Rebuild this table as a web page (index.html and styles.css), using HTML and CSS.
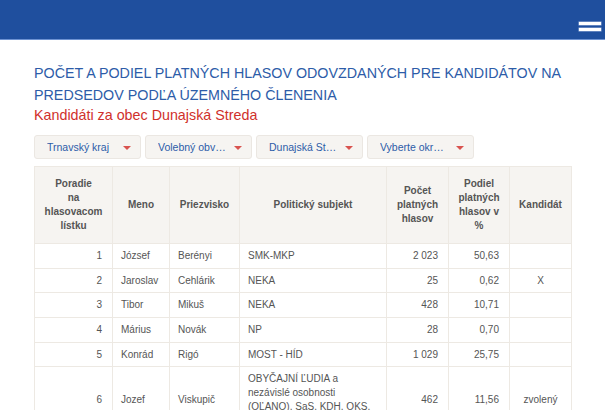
FILE: index.html
```html
<!DOCTYPE html>
<html lang="sk">
<head>
<meta charset="utf-8">
<link rel="stylesheet" href="styles.css">
</head>
<body>
<header class="topbar">
  <button class="burger" aria-label="Menu"><span></span><span></span></button>
</header>
<main class="content">
  <h1 class="title">POČET A PODIEL PLATNÝCH HLASOV ODOVZDANÝCH PRE KANDIDÁTOV NA PREDSEDOV PODĽA ÚZEMNÉHO ČLENENIA</h1>
  <h2 class="subtitle">Kandidáti za obec Dunajská Streda</h2>
  <div class="filters">
    <div class="select"><span class="select-text">Trnavský kraj</span><span class="caret"></span></div>
    <div class="select"><span class="select-text">Volebný obvod č. 4</span><span class="caret"></span></div>
    <div class="select"><span class="select-text">Dunajská Streda</span><span class="caret"></span></div>
    <div class="select"><span class="select-text select-text--short">Vyberte okrsok</span><span class="caret"></span></div>
  </div>
  <table class="results">
    <colgroup>
      <col class="c1"><col class="c2"><col class="c3"><col class="c4"><col class="c5"><col class="c6"><col class="c7">
    </colgroup>
    <thead>
      <tr>
        <th>Poradie<br>na<br>hlasovacom<br>lístku</th>
        <th>Meno</th>
        <th>Priezvisko</th>
        <th>Politický subjekt</th>
        <th>Počet<br>platných<br>hlasov</th>
        <th>Podiel<br>platných<br>hlasov v<br>%</th>
        <th>Kandidát</th>
      </tr>
    </thead>
    <tbody>
      <tr><td class="num">1</td><td>József</td><td>Berényi</td><td>SMK-MKP</td><td class="num">2 023</td><td class="num">50,63</td><td class="ctr"></td></tr>
      <tr><td class="num">2</td><td>Jaroslav</td><td>Cehlárik</td><td>NEKA</td><td class="num">25</td><td class="num">0,62</td><td class="ctr">X</td></tr>
      <tr><td class="num">3</td><td>Tibor</td><td>Mikuš</td><td>NEKA</td><td class="num">428</td><td class="num">10,71</td><td class="ctr"></td></tr>
      <tr><td class="num">4</td><td>Márius</td><td>Novák</td><td>NP</td><td class="num">28</td><td class="num">0,70</td><td class="ctr"></td></tr>
      <tr><td class="num">5</td><td>Konrád</td><td>Rigó</td><td>MOST - HÍD</td><td class="num">1 029</td><td class="num">25,75</td><td class="ctr"></td></tr>
      <tr><td class="num">6</td><td>Jozef</td><td>Viskupič</td><td>OBYČAJNÍ ĽUDIA a nezávislé osobnosti (OĽANO), SaS, KDH, OKS, ZMENA ZDOLA</td><td class="num">462</td><td class="num">11,56</td><td class="ctr">zvolený</td></tr>
    </tbody>
  </table>
</main>
</body>
</html>
```

FILE: styles.css
```css
* { box-sizing: border-box; }

html, body {
  margin: 0;
  padding: 0;
  background: #ffffff;
  font-family: "Liberation Sans", Arial, sans-serif;
}

.topbar {
  height: 40px;
  background: #1f4f9e;
  border-bottom: 1px solid #6d92d2;
  display: flex;
  justify-content: flex-end;
  align-items: flex-end;
  padding: 0 4px 8px 0;
}

.burger {
  display: flex;
  flex-direction: column;
  gap: 3px;
  width: 22px;
  padding: 0;
  margin: 0;
  border: 0;
  background: transparent;
}

.burger span {
  display: block;
  height: 3px;
  width: 22px;
  background: #ffffff;
  box-shadow: 0 0 0 0.5px #9db4dc;
}

.content {
  padding: 0 34px;
}

.title {
  margin: 23px 0 0;
  font-size: 14.3px;
  line-height: 21.5px;
  font-weight: normal;
  color: #2d5ca8;
}

.subtitle {
  margin: 0;
  font-size: 14.3px;
  line-height: 19px;
  font-weight: normal;
  color: #d0302b;
}

.filters {
  display: flex;
  gap: 4px;
  margin-top: 10px;
}

.select {
  width: 107px;
  height: 24px;
  display: flex;
  align-items: center;
  padding: 0 9px 0 12px;
  background: #f6f4f1;
  border: 1px solid #ebe7e2;
  border-radius: 3px;
}

.select-text {
  max-width: 70px;
  min-width: 0;
  white-space: nowrap;
  overflow: hidden;
  text-overflow: ellipsis;
  font-size: 10.5px;
  color: #2d5ca8;
}

.select-text--short {
  max-width: 64px;
}

.caret {
  margin-left: auto;
  width: 0;
  height: 0;
  border-left: 4px solid transparent;
  border-right: 4px solid transparent;
  border-top: 4px solid #d9534f;
  margin-top: 1px;
}

.results {
  margin-top: 7px;
  width: 537px;
  border-collapse: collapse;
  table-layout: fixed;
  font-size: 10px;
  line-height: 14px;
  color: #555555;
}

.c1 { width: 78px; }
.c2 { width: 57px; }
.c3 { width: 70px; }
.c4 { width: 147px; }
.c5 { width: 62px; }
.c6 { width: 61px; }
.c7 { width: 62px; }

.results th,
.results td {
  border: 1px solid #ede9e3;
}

.results th {
  background: #f6f4f1;
  font-weight: bold;
  text-align: center;
  vertical-align: middle;
  padding: 10px 4px;
  color: #555555;
}

.results td {
  padding: 5px 8px 4.7px 8px;
  vertical-align: middle;
  text-align: left;
}

.results td.num {
  text-align: right;
  padding-right: 10px;
}

.results td.ctr {
  text-align: center;
}
```
